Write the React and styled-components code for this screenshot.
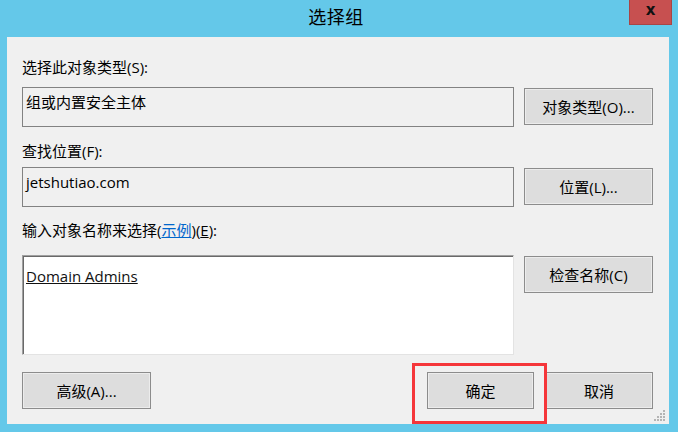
import React from 'react';
import styled, { createGlobalStyle } from 'styled-components';

const GlobalStyle = createGlobalStyle`
  html, body {
    margin: 0;
    padding: 0;
    background: #64c8e9;
  }
  * {
    box-sizing: border-box;
  }
`;

const font = `"Open Sans", "Noto Sans CJK SC", sans-serif`;

const Frame = styled.div`
  width: 678px;
  height: 432px;
  background: #64c8e9;
  display: flex;
  flex-direction: column;
  font-family: ${font};
  color: #000;
  overflow: hidden;
`;

const TitleBar = styled.div`
  height: 37px;
  display: grid;
  grid-template-columns: 1fr auto 1fr;
  padding-right: 6px;
`;

const Title = styled.div`
  grid-column: 2;
  font-size: 18px;
  line-height: 34px;
  letter-spacing: 0.5px;
`;

const CloseButton = styled.div`
  grid-column: 3;
  justify-self: end;
  width: 43px;
  height: 25px;
  background: #c75050;
  border: 1px solid #a84545;
  border-top: none;
  display: flex;
  align-items: center;
  justify-content: center;
  font-family: "DejaVu Sans", sans-serif;
  font-weight: bold;
  font-size: 15px;
  line-height: 1;
  color: #111;
  padding-bottom: 3px;
`;

const Client = styled.div`
  position: relative;
  margin-left: 7px;
  width: 662px;
  height: 387px;
  background: #f0f0f0;
  padding: 20px 16px 15px 15px;
  display: flex;
  flex-direction: column;
`;

const Label = styled.div`
  font-size: 15px;
  line-height: 20px;
  height: 20px;
  margin-top: ${p => p.$gap || 0}px;
  white-space: nowrap;
`;

const Link = styled.span`
  color: #0066cc;
  text-decoration: underline;
`;

const Key = styled.span`
  text-decoration: underline;
`;

const Row = styled.div`
  display: flex;
  align-items: flex-start;
  gap: 10px;
  margin-top: ${p => p.$gap || 0}px;
`;

const Field = styled.div`
  width: 492px;
  height: 40px;
  border: 1px solid #828282;
  background: #f0f0f0;
  padding: 4px 3px;
  font-size: 15px;
  line-height: 20px;
`;

const TextArea = styled.div`
  width: 492px;
  height: 100px;
  background: #fff;
  border: 1px solid;
  border-color: #a0a0a0 #e3e3e3 #e3e3e3 #a0a0a0;
  box-shadow: inset 1px 1px 0 #696969;
  padding: 10px 3px;
  font-size: 15px;
  line-height: 20px;
`;

const Entry = styled.span`
  text-decoration: underline;
  color: #111;
`;

const Button = styled.div`
  width: ${p => p.$w || 129}px;
  height: 37px;
  margin-top: ${p => (p.$inset ? 1 : 0)}px;
  background: #dddddd;
  border: 1px solid #8c8c8c;
  box-shadow: inset 0 0 0 1px #ececec;
  display: flex;
  align-items: center;
  justify-content: center;
  font-size: 15px;
  line-height: 20px;
  white-space: nowrap;
`;

const Footer = styled.div`
  display: flex;
  align-items: flex-start;
  margin-top: 17px;
`;

const FooterRight = styled.div`
  margin-left: auto;
  display: flex;
  gap: 11px;
`;

const Highlight = styled.div`
  position: relative;

  &::after {
    content: '';
    position: absolute;
    top: -9px;
    left: -15px;
    right: -13px;
    bottom: -15px;
    border: 3px solid #f5363a;
    z-index: 2;
    pointer-events: none;
  }
`;

const Grip = styled.svg`
  position: absolute;
  right: 3px;
  bottom: 2px;
`;

const ResizeGrip = () => (
  <Grip width="12" height="12" viewBox="0 0 12 12">
    {[
      [9, 0],
      [9, 3],
      [6, 3],
      [9, 6],
      [6, 6],
      [3, 6],
      [9, 9],
      [6, 9],
      [3, 9],
      [0, 9]
    ].map(([x, y]) => (
      <rect key={`${x}-${y}`} x={x} y={y} width="2" height="2" fill="#b4b4b4" />
    ))}
  </Grip>
);

export default function App() {
  return (
    <Frame>
      <GlobalStyle />
      <TitleBar>
        <Title>选择组</Title>
        <CloseButton>x</CloseButton>
      </TitleBar>
      <Client>
        <Label>选择此对象类型(S):</Label>
        <Row $gap={10}>
          <Field>组或内置安全主体</Field>
          <Button $inset>对象类型(O)...</Button>
        </Row>

        <Label $gap={14}>查找位置(F):</Label>
        <Row $gap={6}>
          <Field>jetshutiao.com</Field>
          <Button $inset>位置(L)...</Button>
        </Row>

        <Label $gap={13}>
          输入对象名称来选择(<Link>示例</Link>)(<Key>E</Key>):
        </Label>
        <Row $gap={15}>
          <TextArea>
            <Entry>Domain Admins</Entry>
          </TextArea>
          <Button $inset>检查名称(C)</Button>
        </Row>

        <Footer>
          <Button>高级(A)...</Button>
          <FooterRight>
            <Highlight>
              <Button $w={107}>确定</Button>
            </Highlight>
            <Button $w={108}>取消</Button>
          </FooterRight>
        </Footer>
        <ResizeGrip />
      </Client>
    </Frame>
  );
}
